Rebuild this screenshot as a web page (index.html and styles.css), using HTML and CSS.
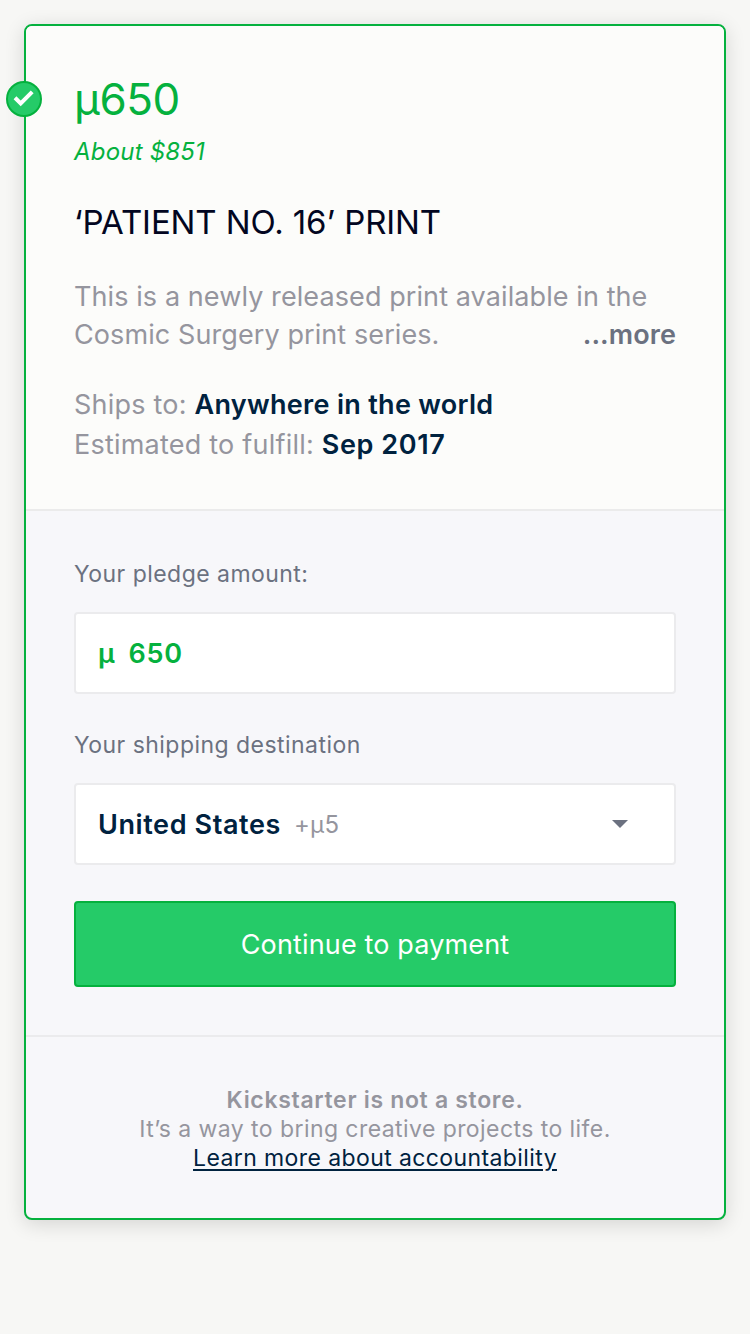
FILE: index.html
```html
<!DOCTYPE html>
<html lang="en">
<head>
<meta charset="utf-8">
<title>Pledge</title>
<link rel="stylesheet" href="styles.css">
</head>
<body>
<main class="card">
  <span class="badge"><svg width="36" height="36" viewBox="0 0 36 36"><circle cx="18" cy="18" r="17" fill="#25cb68" stroke="#05b13e" stroke-width="2"/><path d="M9 16.8l5.7 5.6L26.2 10.8" fill="none" stroke="#fff" stroke-width="4"/></svg></span>
  <section class="reward">
    <h1 class="price">µ650</h1>
    <p class="about">About $851</p>
    <h2 class="title">‘PATIENT NO. 16’ PRINT</h2>
    <div class="desc">
      <p>This is a newly released print available in the</p>
      <div class="row"><span>Cosmic Surgery print series.</span><a class="more">...more</a></div>
    </div>
    <div class="facts">
      <p>Ships to: <b>Anywhere in the world</b></p>
      <p>Estimated to fulfill: <b class="date">Sep 2017</b></p>
    </div>
  </section>
  <section class="form">
    <label class="label">Your pledge amount:</label>
    <div class="field amount"><span>µ</span><span>650</span></div>
    <label class="label destination">Your shipping destination</label>
    <div class="field select"><span>United States</span><span class="extra">+µ5</span><svg class="caret" width="16" height="8" viewBox="0 0 16 8"><path d="M0 0h16L8 8z" fill="#6b7180"/></svg></div>
    <button class="pay">Continue to payment</button>
  </section>
  <footer class="note">
    <p class="strong">Kickstarter is not a store.</p>
    <p>It’s a way to bring creative projects to life.</p>
    <p><a class="learn">Learn more about accountability</a></p>
  </footer>
</main>
</body>
</html>
```
FILE: styles.css
```css
* { box-sizing: border-box; }
body { margin: 0; padding: 24px; background: #f7f7f5; font-family: Inter, "Liberation Sans", sans-serif; height: 1334px; }
h1, h2, p { margin: 0; font-weight: 400; white-space: nowrap; }
.card { position: relative; height: 1196px; border: 2px solid #05b13e; border-radius: 8px; background: #f7f7fa; box-shadow: 0 4px 20px rgba(0,0,0,.14); }
.badge { position: absolute; left: -20px; top: 55px; width: 36px; height: 36px; }
.badge svg { display: block; }
.reward { height: 485px; padding: 44px 48px 0; background: #fcfcfa; border-bottom: 2px solid #ebebeb; border-radius: 6px 6px 0 0; }
.price { font-size: 44px; line-height: 58px; letter-spacing: -.4px; color: #05b13e; }
.about { font-size: 24px; line-height: 30px; letter-spacing: .2px; margin-top: 9px; color: #05b13e; font-style: italic; }
.title { font-size: 33px; line-height: 40px; letter-spacing: -.1px; margin-top: 35px; color: #020621; }
.desc { margin-top: 36px; font-size: 27px; line-height: 38px; letter-spacing: .09px; color: #95959e; }
.row { display: flex; justify-content: space-between; }
.more { font-weight: 600; color: #6b7180; }
.facts { margin-top: 31px; font-size: 27px; line-height: 40px; letter-spacing: .22px; color: #95959e; }
.facts b { font-weight: 600; letter-spacing: .3px; color: #00223f; }
.facts .date { letter-spacing: .6px; }
.form { height: 526px; padding: 48px 48px 0; border-bottom: 2px solid #ebebed; }
.label { display: block; font-size: 23px; line-height: 30px; letter-spacing: .46px; color: #6b7180; white-space: nowrap; }
.field { display: flex; align-items: center; height: 82px; margin-top: 23px; padding: 0 22px; background: #fff; border: 2px solid #ebebed; border-radius: 4px; font-size: 27px; font-weight: 600; letter-spacing: .6px; }
.amount { color: #05b13e; gap: 13px; letter-spacing: .8px; }
.destination { margin-top: 36px; }
.select { color: #00223f; }
.extra { margin: 1px 0 0 13px; font-size: 24px; font-weight: 400; letter-spacing: .3px; color: #95959e; }
.caret { margin-left: auto; margin-right: 24px; }
.pay { display: block; width: 100%; height: 86px; margin-top: 36px; padding: 2px 0 0; border: 2px solid #05b13e; border-radius: 4px; background: #25cb68; color: #fff; font: 400 27px/34px Inter, "Liberation Sans", sans-serif; letter-spacing: .15px; }
.note { padding-top: 49px; text-align: center; font-size: 23px; line-height: 29px; letter-spacing: .43px; color: #95959e; }
.strong { font-weight: 600; letter-spacing: .68px; }
.learn { letter-spacing: .4px; color: #00223f; text-decoration: underline; text-decoration-thickness: 2px; text-underline-offset: 3px; }
```
